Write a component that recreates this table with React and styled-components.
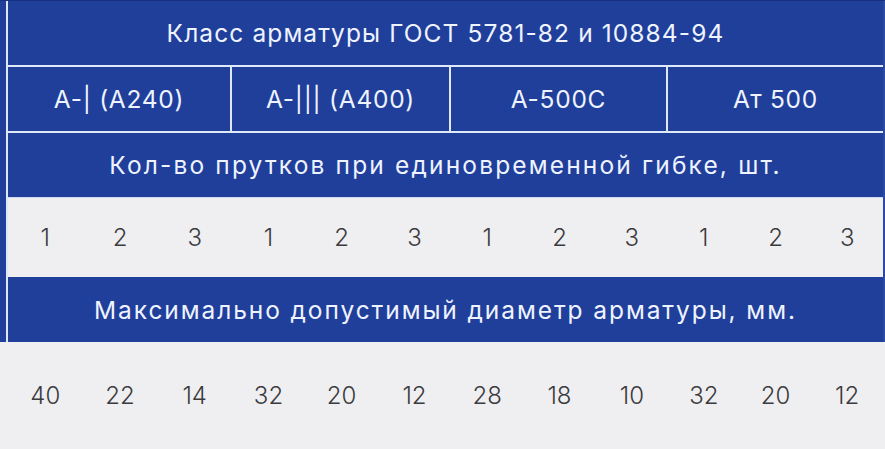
import React from 'react';
import styled, { createGlobalStyle } from 'styled-components';

const BLUE = '#203f9a';
const LIGHT = '#efeff2';
const LINE = '#dfe8f7';

// column widths follow the picture: groups are a little narrower to the right
const groupWidths = [224, 219, 217, 215];
const columns = groupWidths.map(w => `repeat(3, ${w}fr)`).join(' ');

const GlobalStyle = createGlobalStyle`
  html, body {
    margin: 0;
    padding: 0;
    background: ${LIGHT};
  }
  * {
    box-sizing: border-box;
  }
`;

const Sheet = styled.div`
  width: 885px;
  height: 449px;
  overflow: hidden;
  background: ${LIGHT};
  font-family: Inter, 'Noto Sans', sans-serif;
  display: flex;
  flex-direction: column;
`;

// blue strip on the left with the white rule next to it
const Upper = styled.div`
  display: flex;
  background: ${BLUE};
  padding-left: 6px;
  border-top: 1px solid #17317e;
`;

const Table = styled.div`
  flex: 1;
  display: grid;
  grid-template-columns: ${columns};
  border-left: 2px solid ${LINE};
  border-right: 2px solid #2a4aa3;
`;

const HeadCell = styled.div`
  grid-column: span ${props => props.span || 12};
  height: ${props => props.h}px;
  display: flex;
  align-items: center;
  justify-content: center;
  color: #eef3ff;
  font-size: 24.5px;
  font-weight: 400;
  letter-spacing: ${props => props.spacing || '0.03em'};
  white-space: nowrap;
  border-bottom: ${props => (props.rule ? `2px solid ${LINE}` : 'none')};
  border-right: ${props => (props.divider ? `2px solid ${LINE}` : 'none')};
`;

const CountRow = styled.div`
  grid-column: span 12;
  display: grid;
  grid-template-columns: ${columns};
  height: 80px;
  background: ${LIGHT};
  border-top: 1px solid #cfdaf0;
`;

const Lower = styled.div`
  display: grid;
  grid-template-columns: ${columns};
  padding-left: 8px;
  padding-right: 2px;
  height: 107px;
`;

const Num = styled.div`
  display: flex;
  align-items: center;
  justify-content: center;
  color: #3b3b3e;
  font-size: 24px;
  font-weight: 300;
`;

const grades = ['А-| (А240)', 'А-||| (А400)', 'А-500С', 'Ат 500'];
const counts = [1, 2, 3, 1, 2, 3, 1, 2, 3, 1, 2, 3];
const diameters = [40, 22, 14, 32, 20, 12, 28, 18, 10, 32, 20, 12];

const App = () => {
  return (
    <>
      <GlobalStyle />
      <Sheet>
        <Upper>
          <Table>
            <HeadCell h={66} rule spacing="0.045em">
              Класс арматуры ГОСТ 5781-82 и 10884-94
            </HeadCell>
            {grades.map((g, i) => (
              <HeadCell key={g} span={3} h={66} rule divider={i < grades.length - 1}>
                {g}
              </HeadCell>
            ))}
            <HeadCell h={64} spacing="0.088em">
              Кол-во прутков при единовременной гибке, шт.
            </HeadCell>
            <CountRow>
              {counts.map((n, i) => (
                <Num key={i}>{n}</Num>
              ))}
            </CountRow>
            <HeadCell h={65} spacing="0.078em">
              Максимально допустимый диаметр арматуры, мм.
            </HeadCell>
          </Table>
        </Upper>
        <Lower>
          {diameters.map((d, i) => (
            <Num key={i}>{d}</Num>
          ))}
        </Lower>
      </Sheet>
    </>
  );
};

export default App;
